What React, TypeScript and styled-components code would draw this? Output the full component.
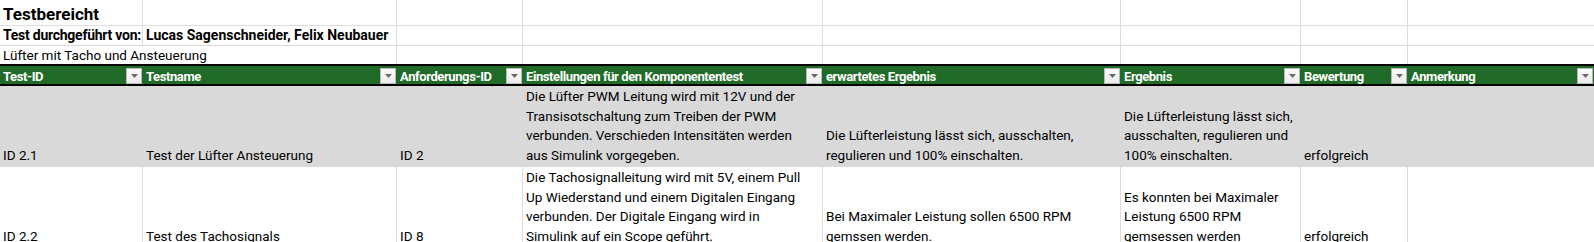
import React from 'react';
import styled, { createGlobalStyle } from 'styled-components';

const COLS = '143px 254px 126px 300px 298px 180px 107px 186px';
const GRID = '#dcdcdc';
const GREEN = '#1f6b27';
const BAND = '#d9d9d9';

const GlobalStyle = createGlobalStyle`
  html, body { margin: 0; padding: 0; background: #ffffff; }
  body {
    font-family: Roboto, "Liberation Sans", Arial, sans-serif;
    color: #000;
    overflow: hidden;
  }
  * { box-sizing: border-box; }
`;

const Sheet = styled.div`
  width: 1594px;
  display: flex;
  flex-direction: column;
`;

const Row = styled.div<{ $h: number }>`
  display: grid;
  grid-template-columns: ${COLS};
  height: ${(p) => p.$h}px;
`;

const TitleCell = styled.div<{
  $span?: number;
  $bottom?: boolean;
  $size?: number;
  $bold?: boolean;
  $tight?: boolean;
}>`
  grid-column: span ${(p) => p.$span ?? 1};
  border-right: 1px solid ${GRID};
  border-bottom: ${(p) => (p.$bottom === false ? 'none' : `1px solid ${GRID}`)};
  display: flex;
  align-items: flex-end;
  padding: 0 3px 1px;
  font-size: ${(p) => p.$size ?? 13.5}px;
  font-weight: ${(p) => (p.$bold ? 700 : 400)};
  letter-spacing: ${(p) => (p.$tight ? '-0.25px' : 'normal')};
  line-height: 1.2;
  white-space: nowrap;
  &:last-child {
    border-right: none;
  }
`;

const HeaderRow = styled.div`
  display: grid;
  grid-template-columns: ${COLS};
  height: 22px;
  background: ${GREEN};
  border-top: 2px solid #000;
  border-bottom: 2px solid #000;
`;

const HeaderCell = styled.div`
  display: flex;
  align-items: center;
  justify-content: space-between;
  padding: 0 1px 0 3px;
  color: #fff;
  font-size: 13px;
  font-weight: 700;
  letter-spacing: -0.4px;
  line-height: 18px;
  white-space: nowrap;
`;

const HeaderLabel = styled.span`
  padding-top: 2px;
`;

const FilterButton = styled.span`
  width: 16px;
  height: 16px;
  flex: none;
  display: flex;
  align-items: center;
  justify-content: center;
  background: linear-gradient(#fbfbfb, #ececec);
  border: 1px solid #b8b8b8;
`;

const DataRow = styled.div<{ $band: boolean }>`
  display: grid;
  grid-template-columns: ${COLS};
  height: 81px;
  background: ${(p) => (p.$band ? BAND : '#fff')};
`;

const DataCell = styled.div<{ $band: boolean }>`
  display: flex;
  flex-direction: column;
  justify-content: flex-end;
  padding: 0 3px 2px;
  border-right: ${(p) => (p.$band ? 'none' : `1px solid ${GRID}`)};
  font-size: 13.5px;
  line-height: 19.5px;
  white-space: nowrap;
  &:last-child {
    border-right: none;
  }
`;

const Line = styled.span`
  display: block;
`;

const Filter = () => (
  <FilterButton>
    <svg width="7" height="4" viewBox="0 0 7 4">
      <polygon points="0,0 7,0 3.5,4" fill="#6a6a6a" />
    </svg>
  </FilterButton>
);

const headers = [
  'Test-ID',
  'Testname',
  'Anforderungs-ID',
  'Einstellungen für den Komponententest',
  'erwartetes Ergebnis',
  'Ergebnis',
  'Bewertung',
  'Anmerkung',
];

type TestRow = {
  id: string;
  name: string;
  req: string;
  settings: string[];
  expected: string[];
  result: string[];
  rating: string;
  note: string;
};

const rows: TestRow[] = [
  {
    id: 'ID 2.1',
    name: 'Test der Lüfter Ansteuerung',
    req: 'ID 2',
    settings: [
      'Die Lüfter PWM Leitung wird mit 12V und der',
      'Transisotschaltung zum Treiben der PWM',
      'verbunden. Verschieden Intensitäten werden',
      'aus Simulink vorgegeben.',
    ],
    expected: ['Die Lüfterleistung lässt sich, ausschalten,', 'regulieren und 100% einschalten.'],
    result: ['Die Lüfterleistung lässt sich,', 'ausschalten, regulieren und', '100% einschalten.'],
    rating: 'erfolgreich',
    note: '',
  },
  {
    id: 'ID 2.2',
    name: 'Test des Tachosignals',
    req: 'ID 8',
    settings: [
      'Die Tachosignalleitung wird mit 5V, einem Pull',
      'Up Wiederstand und einem Digitalen Eingang',
      'verbunden. Der Digitale Eingang wird in',
      'Simulink auf ein Scope geführt.',
    ],
    expected: ['Bei Maximaler Leistung sollen 6500 RPM', 'gemssen werden.'],
    result: ['Es konnten bei Maximaler', 'Leistung 6500 RPM', 'gemsessen werden'],
    rating: 'erfolgreich',
    note: '',
  },
];

const Lines = ({ items }: { items: string[] }) => (
  <>
    {items.map((t, i) => (
      <Line key={i}>{t}</Line>
    ))}
  </>
);

export default function App() {
  return (
    <>
      <GlobalStyle />
      <Sheet>
        <Row $h={26}>
          <TitleCell $size={17} $bold>
            Testbereicht
          </TitleCell>
          {Array.from({ length: 7 }).map((_, i) => (
            <TitleCell key={i} />
          ))}
        </Row>
        <Row $h={20}>
          <TitleCell $bold $size={14} $tight>
            Test durchgeführt von:
          </TitleCell>
          <TitleCell $bold $size={14}>
            Lucas Sagenschneider, Felix Neubauer
          </TitleCell>
          {Array.from({ length: 6 }).map((_, i) => (
            <TitleCell key={i} />
          ))}
        </Row>
        <Row $h={18}>
          <TitleCell $span={2} $bottom={false}>
            Lüfter mit Tacho und Ansteuerung
          </TitleCell>
          {Array.from({ length: 6 }).map((_, i) => (
            <TitleCell key={i} $bottom={false} />
          ))}
        </Row>
        <HeaderRow>
          {headers.map((h) => (
            <HeaderCell key={h}>
              <HeaderLabel>{h}</HeaderLabel>
              <Filter />
            </HeaderCell>
          ))}
        </HeaderRow>
        {rows.map((r, i) => {
          const band = i % 2 === 0;
          return (
            <DataRow key={r.id} $band={band}>
              <DataCell $band={band}>{r.id}</DataCell>
              <DataCell $band={band}>{r.name}</DataCell>
              <DataCell $band={band}>{r.req}</DataCell>
              <DataCell $band={band}>
                <Lines items={r.settings} />
              </DataCell>
              <DataCell $band={band}>
                <Lines items={r.expected} />
              </DataCell>
              <DataCell $band={band}>
                <Lines items={r.result} />
              </DataCell>
              <DataCell $band={band}>{r.rating}</DataCell>
              <DataCell $band={band}>{r.note}</DataCell>
            </DataRow>
          );
        })}
      </Sheet>
    </>
  );
}
